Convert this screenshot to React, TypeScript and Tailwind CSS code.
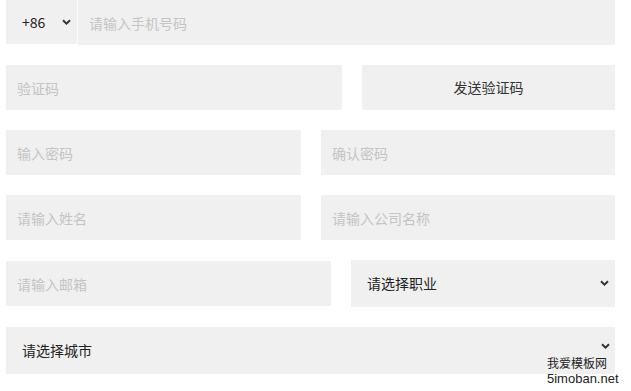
import React from "react";

const font = { fontFamily: '"Noto Sans CJK SC", "Liberation Sans", sans-serif' };

const field =
  "h-[45px] bg-[#f0f0f0] px-[11px] text-[14px] text-[#333] outline-none placeholder:text-[#c4c4c4]";

function Chevron({ className }: { className?: string }) {
  return (
    <svg
      className={className}
      width="9"
      height="6"
      viewBox="0 0 9 6"
      fill="none"
      aria-hidden="true"
    >
      <path d="M1 1.2l3.5 3.4L8 1.2" stroke="#333" strokeWidth="2" />
    </svg>
  );
}

function Select({
  label,
  className,
  chevron,
}: {
  label: string;
  className?: string;
  chevron: string;
}) {
  return (
    <div className={`relative ${className ?? ""}`}>
      <select
        className="h-full w-full appearance-none bg-[#f0f0f0] pl-[16px] text-[14px] text-[#222] outline-none"
        style={font}
        defaultValue=""
      >
        <option value="">{label}</option>
      </select>
      <Chevron className={`pointer-events-none absolute ${chevron}`} />
    </div>
  );
}

export default function App() {
  return (
    <div className="relative h-[391px] w-[631px] bg-white" style={font}>
      <div className="flex w-[615px] flex-col pl-[6px]">
        {/* 手机号 */}
        <div className="flex h-[44px]">
          <Select label="+86" className="w-[71px]" chevron="left-[56px] top-[19px]" />
          <div className="w-px bg-[#fafafa]" />
          <input className={`${field} h-[44px] flex-1`} placeholder="请输入手机号码" style={font} />
        </div>

        {/* 验证码 */}
        <div className="mt-[21px] flex gap-5">
          <input className={`${field} w-[336px]`} placeholder="验证码" style={font} />
          <button
            className="h-[45px] flex-1 bg-[#f0f0f0] text-[14px] text-[#333]"
            style={font}
          >
            发送验证码
          </button>
        </div>

        <div className="mt-5 flex gap-5">
          <input className={`${field} w-[295px]`} placeholder="输入密码" style={font} />
          <input className={`${field} flex-1`} placeholder="确认密码" style={font} />
        </div>

        <div className="mt-5 flex gap-5">
          <input className={`${field} w-[295px]`} placeholder="请输入姓名" style={font} />
          <input className={`${field} flex-1`} placeholder="请输入公司名称" style={font} />
        </div>

        <div className="mt-5 flex h-[47px] items-center gap-5">
          <input className={`${field} w-[325px]`} placeholder="请输入邮箱" style={font} />
          <Select label="请选择职业" className="h-[47px] flex-1" chevron="right-[6px] top-[20px]" />
        </div>

        <Select label="请选择城市" className="mt-5 h-[47px]" chevron="right-[5px] top-[16px]" />
      </div>

      {/* 水印 */}
      <div className="absolute left-[547px] top-[355px] leading-[16px] text-[#222]">
        <div className="text-[12px]" style={font}>我爱模板网</div>
        <div className="text-[13px]" style={{ fontFamily: '"Liberation Sans", sans-serif' }}>
          5imoban.net
        </div>
      </div>
    </div>
  );
}
